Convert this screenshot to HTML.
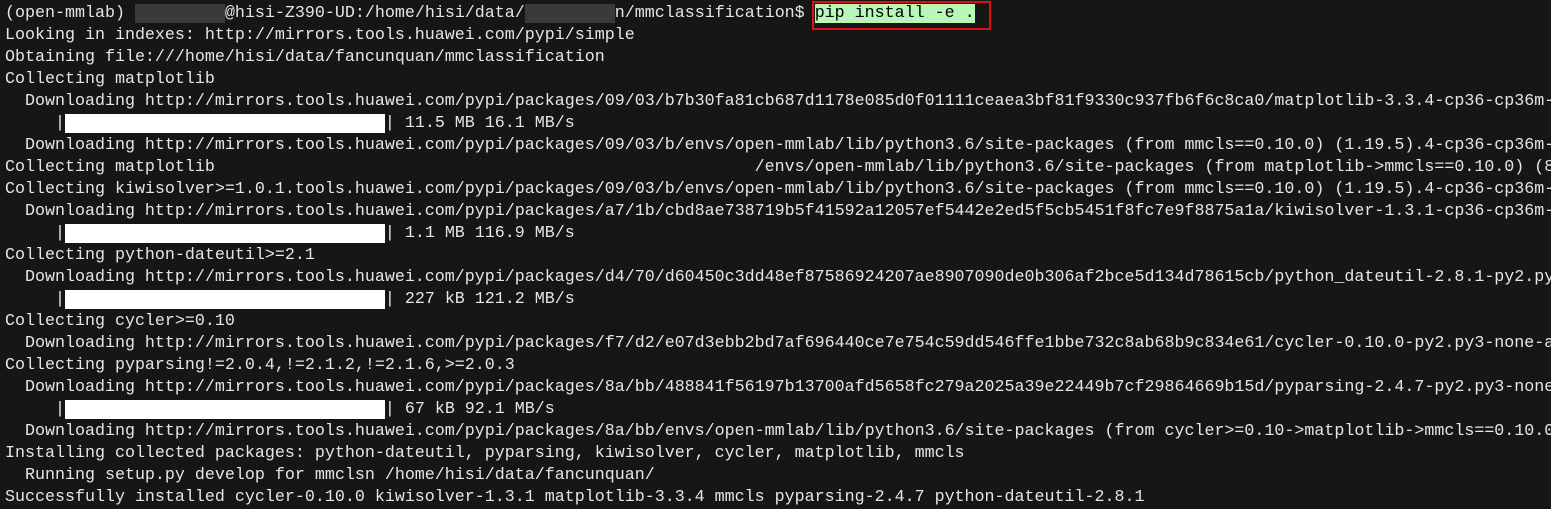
<!DOCTYPE html>
<html><head><meta charset="utf-8"><style>
html,body{margin:0;padding:0;background:#161616;}
body{width:1551px;height:504px;overflow:hidden;position:relative;}
.t{position:absolute;left:5px;top:3px;font-family:"Liberation Mono",monospace;font-size:16.67px;line-height:22px;color:#e6e6e6;white-space:pre;}
.b{background:#3a3a3a;color:transparent;}
.bar{background:#fff;color:transparent;}
.hl{background:#b9f7b9;color:#000;}
.box{position:absolute;left:812px;top:1px;width:175px;height:25px;border:2px solid #e01010;}
</style></head><body>
<div class="t">(open-mmlab) <span class="b">xxxxxxxxx</span>@hisi-Z390-UD:/home/hisi/data/<span class="b">xxxxxxxxx</span>n/mmclassification$ <span class="hl">pip install -e .</span>
Looking in indexes: http://mirrors.tools.huawei.com/pypi/simple
Obtaining file:///home/hisi/data/fancunquan/mmclassification
Collecting matplotlib
  Downloading http://mirrors.tools.huawei.com/pypi/packages/09/03/b7b30fa81cb687d1178e085d0f01111ceaea3bf81f9330c937fb6f6c8ca0/matplotlib-3.3.4-cp36-cp36m-
     |<span class="bar">████████████████████████████████</span>| 11.5 MB 16.1 MB/s
  Downloading http://mirrors.tools.huawei.com/pypi/packages/09/03/b/envs/open-mmlab/lib/python3.6/site-packages (from mmcls==0.10.0) (1.19.5).4-cp36-cp36m-
Collecting matplotlib                                                      /envs/open-mmlab/lib/python3.6/site-packages (from matplotlib-&gt;mmcls==0.10.0) (8
Collecting kiwisolver&gt;=1.0.1.tools.huawei.com/pypi/packages/09/03/b/envs/open-mmlab/lib/python3.6/site-packages (from mmcls==0.10.0) (1.19.5).4-cp36-cp36m-
  Downloading http://mirrors.tools.huawei.com/pypi/packages/a7/1b/cbd8ae738719b5f41592a12057ef5442e2ed5f5cb5451f8fc7e9f8875a1a/kiwisolver-1.3.1-cp36-cp36m-
     |<span class="bar">████████████████████████████████</span>| 1.1 MB 116.9 MB/s
Collecting python-dateutil&gt;=2.1
  Downloading http://mirrors.tools.huawei.com/pypi/packages/d4/70/d60450c3dd48ef87586924207ae8907090de0b306af2bce5d134d78615cb/python_dateutil-2.8.1-py2.py
     |<span class="bar">████████████████████████████████</span>| 227 kB 121.2 MB/s
Collecting cycler&gt;=0.10
  Downloading http://mirrors.tools.huawei.com/pypi/packages/f7/d2/e07d3ebb2bd7af696440ce7e754c59dd546ffe1bbe732c8ab68b9c834e61/cycler-0.10.0-py2.py3-none-a
Collecting pyparsing!=2.0.4,!=2.1.2,!=2.1.6,&gt;=2.0.3
  Downloading http://mirrors.tools.huawei.com/pypi/packages/8a/bb/488841f56197b13700afd5658fc279a2025a39e22449b7cf29864669b15d/pyparsing-2.4.7-py2.py3-none
     |<span class="bar">████████████████████████████████</span>| 67 kB 92.1 MB/s
  Downloading http://mirrors.tools.huawei.com/pypi/packages/8a/bb/envs/open-mmlab/lib/python3.6/site-packages (from cycler&gt;=0.10-&gt;matplotlib-&gt;mmcls==0.10.0
Installing collected packages: python-dateutil, pyparsing, kiwisolver, cycler, matplotlib, mmcls
  Running setup.py develop for mmclsn /home/hisi/data/fancunquan/
Successfully installed cycler-0.10.0 kiwisolver-1.3.1 matplotlib-3.3.4 mmcls pyparsing-2.4.7 python-dateutil-2.8.1</div>
<div class="box"></div>
</body></html>
